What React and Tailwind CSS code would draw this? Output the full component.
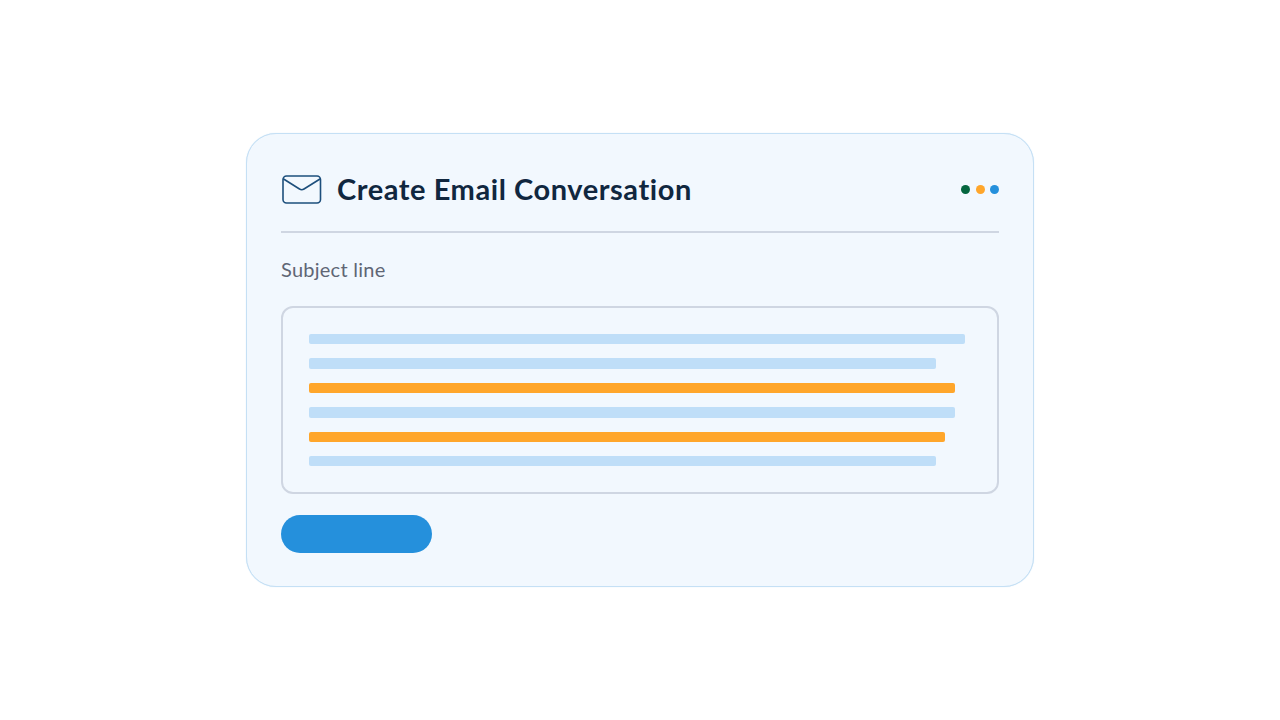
export default function App() {
  const bars = [
    ["w-[656px]", "bg-[#bfdef8]", "mt-0"],
    ["w-[627px]", "bg-[#bfdef8]", "mt-[14px]"],
    ["w-[646px]", "bg-[#ffa62b]", "mt-[14px]"],
    ["w-[646px]", "bg-[#bfdef8]", "mt-[14px]"],
    ["w-[636px]", "bg-[#ffa62b]", "mt-[14px]"],
    ["w-[627px]", "bg-[#bfdef8]", "mt-[14px]"],
  ];
  return (
    <div className="min-h-screen bg-white flex items-center justify-center font-['Lato','Noto_Sans',sans-serif]">
      <div className="w-[788px] h-[454px] rounded-[30px] border border-[#c5e0f5] shadow-[0_0_1px_#c5e0f5] bg-[#f2f8fe] px-[34px] flex flex-col">
        <div className="h-[99px] shrink-0 flex items-center justify-between border-b-2 border-[#cfd6e2] pt-[13px]">
          <div className="flex items-center gap-[15px]">
            <svg width="41" height="31" viewBox="0 0 41 31" fill="none" stroke="#1d4f7c" strokeWidth="1.6" strokeLinejoin="round" strokeLinecap="round">
              <rect x="2" y="2" width="37.5" height="27" rx="3.5" />
              <path d="M2.6 5 L18.5 15 Q20.7 16.4 23 15 L39 5" />
            </svg>
            <span className="text-[29px] leading-none font-bold text-[#10273f] tracking-[0.56px] -translate-y-px">Create Email Conversation</span>
          </div>
          <div className="flex items-center gap-[5.5px]">
            <span className="w-[9px] h-[9px] rounded-full bg-[#05663f]" />
            <span className="w-[9px] h-[9px] rounded-full bg-[#ffa62b]" />
            <span className="w-[9px] h-[9px] rounded-full bg-[#2590dc]" />
          </div>
        </div>
        <div className="mt-[24px] text-[20px] leading-[24px] text-[#5f6675] tracking-[0.25px]">Subject line</div>
        <div className="mt-[25px] h-[188px] rounded-[12px] border-2 border-[#cfd6e2] pt-[26px] pl-[26px]">
          {bars.map(([w, c, m], i) => (
            <div key={i} className={`h-[10.4px] rounded-[2px] ${w} ${c} ${m}`} />
          ))}
        </div>
        <div className="mt-[21px] w-[151px] h-[38px] rounded-full bg-[#2590dc]" />
      </div>
    </div>
  );
}
